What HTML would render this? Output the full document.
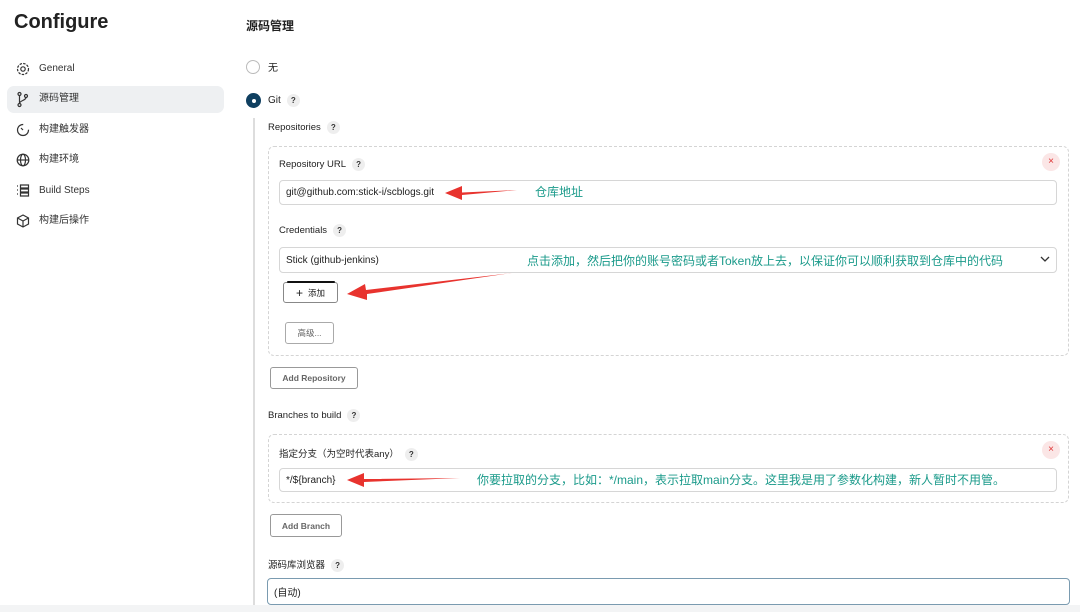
<!DOCTYPE html>
<html><head><meta charset="utf-8"><style>
*{margin:0;padding:0;box-sizing:border-box}
body{width:1080px;height:612px;background:#fff;font-family:"Liberation Sans","Noto Sans CJK SC",sans-serif;color:#222;position:relative;overflow:hidden;font-size:10px}
.a{position:absolute;white-space:nowrap}
.q{display:inline-block;width:13px;height:13px;border-radius:50%;background:#eee;color:#333;font-size:8px;font-weight:bold;text-align:center;line-height:13px;margin-left:6px;vertical-align:middle}
.nav{left:39px;font-size:10px;color:#333;line-height:12px}
.box{position:absolute;border:1px dashed #d4d4d4;border-radius:6px}
.inp{position:absolute;border:1px solid #d6d6d6;border-radius:4px;background:#fff;font-size:10px;padding-left:6px;display:flex;align-items:center;color:#222}
.btn{position:absolute;border:1px solid #999;border-radius:3px;background:#fff;font-size:8.5px;font-weight:bold;color:#666;display:flex;align-items:center;justify-content:center}
.x{position:absolute;width:18px;height:18px;border-radius:50%;background:#fbe6e6;color:#d33;font-size:10px;text-align:center;line-height:17px}
.t{color:#1a9a8a;font-size:12px}
</style></head><body>
<div class="a" style="left:14px;top:11px;font-size:20px;font-weight:bold;color:#222">Configure</div>
<div class="a" style="left:7px;top:86px;width:217px;height:27px;background:#eef0f2;border-radius:7px"></div>
<svg class="a" style="left:16px;top:62px" width="15" height="180" fill="none" stroke="#333" stroke-width="1.2">
<circle cx="7" cy="7" r="2.2"/><circle cx="7" cy="7" r="5.5" stroke-dasharray="2.5 1.2"/>
<circle cx="3.5" cy="32" r="1.5"/><circle cx="3.5" cy="43" r="1.5"/><circle cx="10" cy="34" r="1.5"/><path d="M3.5 33.5v8M10 35.5c0 3-6.5 3-6.5 6"/>
<circle cx="7" cy="68" r="5.5" stroke-dasharray="26 8"/><path d="M7 68l-2-2"/>
<circle cx="7" cy="98" r="5.8"/><ellipse cx="7" cy="98" rx="2.5" ry="5.8"/><path d="M1.2 98h11.6"/>
<path d="M1 124h1M1 128h1M1 132h1M4.5 123h8v3h-8zM4.5 127h8v3h-8zM4.5 131h8v3h-8z"/>
<path d="M7 153l5.5 3v6l-5.5 3-5.5-3v-6zM1.5 156l5.5 3 5.5-3M7 159v6"/>
</svg>
<div class="a nav" style="top:63px">General</div>
<div class="a nav" style="top:93px">源码管理</div>
<div class="a nav" style="top:124px">构建触发器</div>
<div class="a nav" style="top:154px">构建环境</div>
<div class="a nav" style="top:185px">Build Steps</div>
<div class="a nav" style="top:215px">构建后操作</div>

<div class="a" style="left:246px;top:17px;font-size:12px;font-weight:bold">源码管理</div>
<div class="a" style="left:246px;top:60px;width:14px;height:14px;border:1px solid #bbb;border-radius:50%"></div>
<div class="a" style="left:268px;top:59px;font-size:10px">无</div>
<div class="a" style="left:246px;top:93px;width:15px;height:15px;background:#0f3f60;border-radius:50%"></div>
<div class="a" style="left:251.5px;top:98.5px;width:4px;height:4px;background:#fff;border-radius:50%"></div>
<div class="a" style="left:268px;top:94px">Git<span class="q">?</span></div>
<div class="a" style="left:253px;top:118px;width:2px;height:494px;background:#ddd"></div>

<div class="a" style="left:268px;top:121px;font-size:9.5px">Repositories<span class="q">?</span></div>
<div class="box" style="left:268px;top:146px;width:801px;height:210px"></div>
<div class="a" style="left:279px;top:158px;font-size:9.5px">Repository URL<span class="q">?</span></div>
<div class="x" style="left:1042px;top:153px">×</div>
<div class="inp" style="left:279px;top:180px;width:778px;height:25px">git@github.com:stick-i/scblogs.git</div>
<div class="a" style="left:279px;top:224px;font-size:9.5px">Credentials<span class="q">?</span></div>
<div class="inp" style="left:279px;top:247px;width:778px;height:26px">Stick (github-jenkins)</div>
<svg class="a" style="left:1039px;top:254px" width="12" height="10"><path d="M2 3l4 4 4-4" stroke="#333" stroke-width="1.3" fill="none"/></svg>
<div class="btn" style="left:283px;top:282px;width:55px;height:21px;color:#222;font-weight:normal;border-color:#888"><span style="font-size:12px;margin-right:5px">+</span>添加</div>
<div class="a" style="left:287px;top:281px;width:48px;height:2px;background:#111;border-radius:2px"></div>
<div class="btn" style="left:285px;top:322px;width:49px;height:22px;font-weight:normal;border-color:#aaa">高级...</div>
<div class="btn" style="left:270px;top:367px;width:88px;height:22px">Add Repository</div>

<div class="a" style="left:268px;top:409px;font-size:9.5px">Branches to build<span class="q">?</span></div>
<div class="box" style="left:268px;top:434px;width:801px;height:69px"></div>
<div class="a" style="left:279px;top:446px;font-size:9.5px">指定分支（为空时代表any）<span class="q">?</span></div>
<div class="x" style="left:1042px;top:441px">×</div>
<div class="inp" style="left:279px;top:468px;width:778px;height:24px">*/${branch}</div>
<div class="btn" style="left:270px;top:514px;width:72px;height:23px">Add Branch</div>
<div class="a" style="left:268px;top:557px;font-size:9.5px">源码库浏览器<span class="q">?</span></div>
<div class="inp" style="left:267px;top:578px;width:803px;height:27px;border:1px solid #7a9bb0">(自动)</div>
<div class="a" style="left:0;top:605px;width:1080px;height:7px;background:#f3f4f5"></div>

<div class="a t" style="left:535px;top:183px">仓库地址</div>
<div class="a t" style="left:527px;top:252px">点击添加，然后把你的账号密码或者Token放上去，以保证你可以顺利获取到仓库中的代码</div>
<div class="a t" style="left:477px;top:471px">你要拉取的分支，比如：*/main，表示拉取main分支。这里我是用了参数化构建，新人暂时不用管。</div>
<svg class="a" style="left:0;top:0" width="1080" height="612">
<path d="M517 190L462 192.5L462 186L445 193L462 200L462 195Z" fill="#e8332e"/>
<path d="M512 273L366 290L365 284L347 294L367 300L367 294Z" fill="#e8332e"/>
<path d="M460 478L364 479L364 473L347 480L364 487L364 482Z" fill="#e8332e"/>
</svg>
</body></html>
